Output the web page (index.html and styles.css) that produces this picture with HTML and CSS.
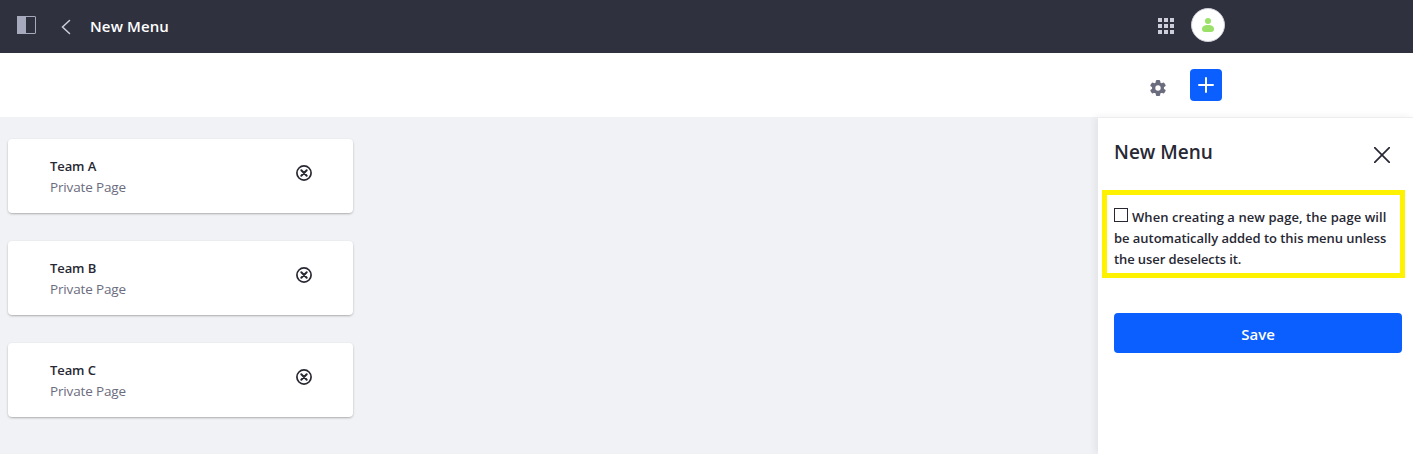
FILE: index.html
```html
<!DOCTYPE html>
<html lang="en">
<head>
<meta charset="utf-8">
<title>New Menu</title>
<link rel="stylesheet" href="styles.css">
</head>
<body>
<header class="topbar">
  <svg class="product-menu" width="19" height="18" viewBox="0 0 19 18"><rect x=".5" y=".5" width="18" height="17" rx=".5" fill="none" stroke="#a7a9bc"/><path d="M0 0h9v18H0z" fill="#a7a9bc"/></svg>
  <svg class="back" width="10" height="16" viewBox="0 0 10 16"><path d="M8.500 1.500 1.500 8l7 6.500" fill="none" stroke="#cdced9" stroke-width="1.500" stroke-linecap="round"/></svg>
  <h1 class="topbar-title">New Menu</h1>
  <svg class="apps" width="16" height="16" viewBox="0 0 16 16" fill="#cdced9"><path d="M0 0h4v4H0zM6 0h4v4H6zM12 0h4v4h-4zM0 6h4v4H0zM6 6h4v4H6zM12 6h4v4h-4zM0 12h4v4H0zM6 12h4v4H6zM12 12h4v4h-4z"/></svg>
  <div class="avatar"><svg width="12" height="14" viewBox="0 0 12 14" fill="#9be169"><circle cx="6" cy="3" r="3"/><path d="M0 11c0-2.600 2.500-4 6-4s6 1.400 6 4c0 2-1 3-3 3H3c-2 0-3-1-3-3z"/></svg></div>
</header>
<div class="toolbar">
  <svg class="gear" width="16" height="16" viewBox="0 0 16 16"><g fill="#6b6c7e"><circle cx="8" cy="8" r="6"/><rect x="5.800" y="0" width="4.400" height="16" rx="1.200"/><rect x="5.800" y="0" width="4.400" height="16" rx="1.200" transform="rotate(60 8 8)"/><rect x="5.800" y="0" width="4.400" height="16" rx="1.200" transform="rotate(120 8 8)"/></g><circle cx="8" cy="8" r="2.700" fill="#fff"/></svg>
  <button class="add" aria-label="Add"><svg width="16" height="16" viewBox="0 0 16 16"><path d="M8 1v14M1 8h14" stroke="#fff" stroke-width="2" stroke-linecap="round"/></svg></button>
</div>
<div class="workspace">
  <main class="cards">
    <article class="card"><div><h2 class="card-title">Team A</h2><p class="card-type">Private Page</p></div><svg class="remove" width="16" height="16" viewBox="0 0 16 16" fill="none" stroke="#272833"><circle cx="8" cy="8" r="7.100" stroke-width="1.700"/><path d="m5.300 5.300 5.400 5.400m0-5.400-5.400 5.400" stroke-width="2" stroke-linecap="round"/></svg></article>
    <article class="card"><div><h2 class="card-title">Team B</h2><p class="card-type">Private Page</p></div><svg class="remove" width="16" height="16" viewBox="0 0 16 16" fill="none" stroke="#272833"><circle cx="8" cy="8" r="7.100" stroke-width="1.700"/><path d="m5.300 5.300 5.400 5.400m0-5.400-5.400 5.400" stroke-width="2" stroke-linecap="round"/></svg></article>
    <article class="card"><div><h2 class="card-title">Team C</h2><p class="card-type">Private Page</p></div><svg class="remove" width="16" height="16" viewBox="0 0 16 16" fill="none" stroke="#272833"><circle cx="8" cy="8" r="7.100" stroke-width="1.700"/><path d="m5.300 5.300 5.400 5.400m0-5.400-5.400 5.400" stroke-width="2" stroke-linecap="round"/></svg></article>
  </main>
  <aside class="sidebar">
    <div class="sidebar-head"><h2 class="sidebar-title">New Menu</h2><svg class="close" width="16" height="16" viewBox="0 0 16 16"><path d="m.7.7 14.600 14.600m0-14.600L.7 15.300" stroke="#272833" stroke-width="1.700" stroke-linecap="round"/></svg></div>
    <label class="option"><input class="check" type="checkbox"><span class="line-first">When creating a new page, the page will</span><br><span class="line-second">be automatically added to this menu unless</span><br><span class="line-third">the user deselects it.</span></label>
    <button class="save">Save</button>
  </aside>
</div>
</body>
</html>
```
FILE: styles.css
```css
* { box-sizing: border-box; }
body { margin: 0; height: 454px; overflow: hidden; display: flex; flex-direction: column; background: #fff; color: #272833; font-family: "Open Sans", "Noto Sans", sans-serif; }
h1, h2, p { margin: 0; }
svg { display: block; flex: none; }
button { border: 0; padding: 0; font-family: inherit; }
.topbar { flex: none; height: 53px; padding: 0 188px 0 17px; display: flex; align-items: flex-start; background: #30313f; }
.product-menu { margin-top: 16px; }
.back { margin: 19px 0 0 25px; }
.topbar-title { margin: 14px auto 0 19px; color: #fff; font-size: 15px; font-weight: 600; line-height: 24px; letter-spacing: .12px; }
.apps { margin: 18px 17px 0 0; }
.avatar { width: 34px; height: 34px; margin-top: 8px; border-radius: 50%; border: 1px solid #cdced9; background: #fff; display: flex; align-items: center; justify-content: center; }
.toolbar { flex: none; height: 64px; padding: 16px 191px 0 0; display: flex; justify-content: flex-end; }
.gear { margin: 11px 24px 0 0; }
.add { width: 32px; height: 32px; border-radius: 4px; background: #0b5fff; display: flex; align-items: center; justify-content: center; }
.workspace { flex: 1; display: flex; background: #f1f2f5; }
.cards { flex: 1; padding: 22px 8px 0; display: flex; flex-direction: column; gap: 28px; }
.card { width: 345px; height: 74px; padding: 17px 41px 0 42px; display: flex; justify-content: space-between; border-radius: 4px; background: #fff; box-shadow: 0 1px 3px -1px rgba(0,0,0,.6); }
.card-title { font-size: 13px; font-weight: 600; line-height: 21px; letter-spacing: -.1px; }
.card-type { color: #6b6c7e; font-size: 13.5px; line-height: 21px; letter-spacing: -.15px; }
.remove { margin-top: 9px; }
.sidebar { width: 315px; padding: 19px 8px 0 4px; border-top: 1px solid #eeeef2; background: #fff; box-shadow: -3px 0 7px rgba(39,40,51,.07); }
.sidebar-head { padding: 0 15px 0 12px; display: flex; justify-content: space-between; }
.sidebar-title { font-size: 19px; font-weight: 600; line-height: 30px; }
.close { margin-top: 10px; }
.option { display: block; height: 88px; margin-top: 23px; padding: 12px 0 0 7px; border: 5px solid #fff200; font-size: 13px; font-weight: 600; line-height: 21px; white-space: nowrap; }
.line-first { letter-spacing: .07px; }
.line-second { letter-spacing: -.04px; }
.line-third { letter-spacing: -.1px; }
.check { appearance: none; width: 14px; height: 14px; margin: 0 4px 0 0; vertical-align: 0; border: 1px solid #272833; background: #fff; }
.save { display: block; width: 288px; height: 40px; margin: 35px 0 0 12px; padding-top: 2px; border-radius: 4px; background: #0b5fff; color: #fff; font-size: 15px; font-weight: 600; line-height: 38px; }
```
